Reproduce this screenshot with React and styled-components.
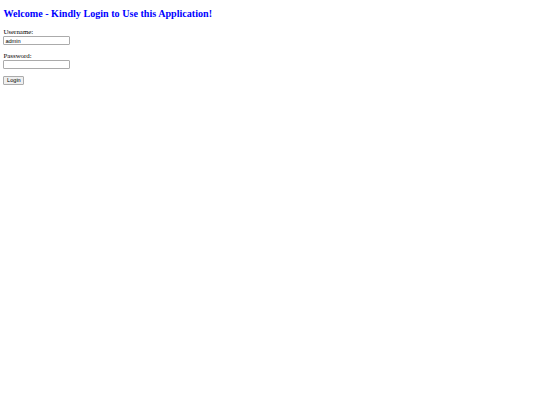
import React from "react";
import styled, { createGlobalStyle } from "styled-components";

const GlobalStyle = createGlobalStyle`
  html, body {
    margin: 0;
    padding: 0;
    background: #fff;
  }
  body {
    font-family: "Liberation Serif", "Times New Roman", serif;
    color: #000;
  }
`;

const Page = styled.div`
  padding: 0 3.4px;
`;

const Title = styled.h2`
  margin: 8.4px 0;
  font-family: "Liberation Serif", "Times New Roman", serif;
  font-size: 10.125px;
  line-height: 11.6px;
  font-weight: bold;
  color: #0000ff;
`;

const LoginForm = styled.form`
  display: flex;
  flex-direction: column;
  align-items: flex-start;
  gap: 7.2px;
`;

const Field = styled.div`
  display: flex;
  flex-direction: column;
  align-items: flex-start;
`;

const Label = styled.label`
  font-size: 6.9px;
  line-height: 7.8px;
`;

const TextInput = styled.input`
  box-sizing: border-box;
  width: 67px;
  height: 9px;
  margin: 0;
  padding: 0 1px;
  border: 1px solid #ababab;
  border-radius: 1px;
  font-family: "Liberation Sans", Arial, sans-serif;
  font-size: 5.6px;
  line-height: 7px;
  color: #000;
  outline: none;
`;

const SubmitButton = styled.button`
  box-sizing: border-box;
  width: 21px;
  height: 9px;
  margin: 0;
  padding: 0;
  border: 1px solid #ababab;
  border-radius: 1px;
  background: #efefef;
  font-family: "Liberation Sans", Arial, sans-serif;
  font-size: 5.6px;
  line-height: 7px;
  color: #000;
`;

export default function App() {
  return (
    <Page>
      <GlobalStyle />
      <Title>Welcome - Kindly Login to Use this Application!</Title>
      <LoginForm onSubmit={(e) => e.preventDefault()}>
        <Field>
          <Label htmlFor="username">Username:</Label>
          <TextInput id="username" type="text" defaultValue="admin" />
        </Field>
        <Field>
          <Label htmlFor="password">Password:</Label>
          <TextInput id="password" type="password" />
        </Field>
        <SubmitButton type="submit">Login</SubmitButton>
      </LoginForm>
    </Page>
  );
}
